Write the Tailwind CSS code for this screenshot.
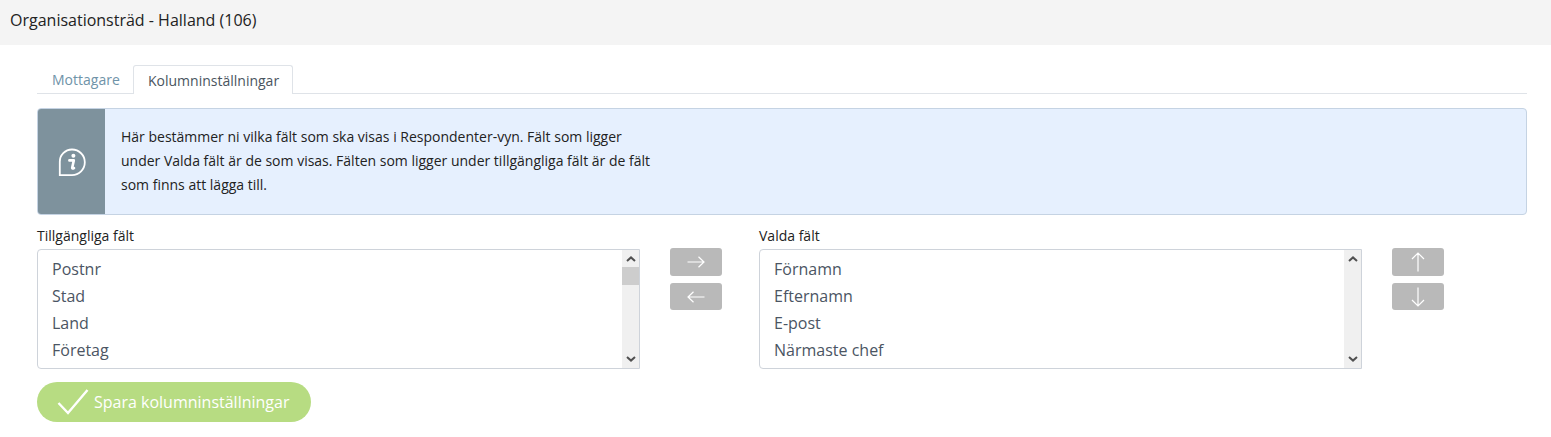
<!DOCTYPE html>
<html lang="sv">
<head>
  <meta charset="UTF-8" />
  <title>Kolumninställningar</title>
  <script src="https://cdn.jsdelivr.net/npm/@tailwindcss/browser@4"></script>
</head>
<body class="bg-white font-['Open_Sans',sans-serif] overflow-hidden">
  <!-- Header -->
  <div class="h-[45px] bg-[#f4f4f4] pl-[10px] pt-[9px] text-[16px] leading-[22px] text-[#222]">Organisationsträd - Halland (106)</div>

  <div class="pl-[37px] pr-[24px] pt-[20px]">
    <!-- Tabs -->
    <div class="flex h-[29px] border-b border-[#dfe3e8] text-[14px]">
      <div class="w-[96px] pl-[15px] pt-[5px] leading-[19px] text-[#6f93a8]">Mottagare</div>
      <div class="w-[160px] h-[29px] bg-white border border-b-0 border-[#dfe3e8] rounded-t-[3px] pl-[14px] pt-[5px] leading-[19px] text-[#4a5560]">Kolumninställningar</div>
    </div>

    <!-- Info box -->
    <div class="mt-[14px] h-[107px] flex bg-[#e6f0fe] border border-[#c5d3e3] rounded-[4px]">
      <div class="w-[67px] bg-[#7e929d] rounded-l-[3px] flex items-center justify-center">
        <svg width="28" height="28" viewBox="0 0 28 28" fill="none" class="mt-[1px]">
          <path d="M14 1.5a12 12 0 1 1 0 25.6H1.8V14A12.2 12.2 0 0 1 14 1.5Z" stroke="#fff" stroke-width="1.8"/>
          <circle cx="15.4" cy="7.8" r="2" fill="#fff"/>
          <path d="M11.4 12.4h4.4l-1.6 7.4c-.1.6.6.8 1.8.2M11.2 20.6" stroke="#fff" stroke-width="2.6" stroke-linecap="round" stroke-linejoin="round"/>
        </svg>
      </div>
      <p class="pl-[16px] pt-[16px] text-[14px] leading-[24px] text-[#222]">
        Här bestämmer ni vilka fält som ska visas i Respondenter-vyn. Fält som ligger<br>
        under Valda fält är de som visas. Fälten som ligger under tillgängliga fält är de fält<br>
        som finns att lägga till.
      </p>
    </div>

    <!-- Field lists -->
    <div class="mt-[11px] flex">
      <div class="w-[603px]">
        <div class="h-[19px] text-[14px] leading-[19px] text-[#222]">Tillgängliga fält</div>
        <div class="mt-[4px] h-[120px] flex border border-[#ced3da] rounded-[4px] rounded-r-none">
          <div class="flex-1 pl-[14px] pt-[6px] text-[16px] leading-[27px] text-[#4b5563]">
            <div>Postnr</div>
            <div>Stad</div>
            <div>Land</div>
            <div>Företag</div>
          </div>
          <div class="w-[17px] bg-[#f0f0f0] flex flex-col items-center">
            <svg width="10" height="6" viewBox="0 0 10 6" fill="none" class="mt-[6px]"><path d="M1 5l4-3.6L9 5" stroke="#505050" stroke-width="2"/></svg>
            <div class="mt-[5px] w-full h-[18px] bg-[#cdcdcd]"></div>
            <svg width="10" height="6" viewBox="0 0 10 6" fill="none" class="mt-auto mb-[6px]"><path d="M1 1l4 3.6L9 1" stroke="#505050" stroke-width="2"/></svg>
          </div>
        </div>
      </div>

      <div class="ml-[30px] w-[52px] pt-[22px] flex flex-col gap-[7px]">
        <div class="h-[28px] bg-[#b9b9b9] rounded-[3px] flex items-center justify-center">
          <svg width="18" height="12" viewBox="0 0 18 12" fill="none"><path d="M0.5 6H17M11.5 0.8 17 6l-5.5 5.2" stroke="#fff" stroke-width="1.2"/></svg>
        </div>
        <div class="h-[27px] bg-[#b9b9b9] rounded-[3px] flex items-center justify-center">
          <svg width="18" height="12" viewBox="0 0 18 12" fill="none"><path d="M17.5 6H1M6.5 0.8 1 6l5.5 5.2" stroke="#fff" stroke-width="1.2"/></svg>
        </div>
      </div>

      <div class="ml-[37px] w-[603px]">
        <div class="h-[19px] text-[14px] leading-[19px] text-[#222]">Valda fält</div>
        <div class="mt-[4px] h-[120px] flex border border-[#ced3da] rounded-[4px] rounded-r-none">
          <div class="flex-1 pl-[14px] pt-[6px] text-[16px] leading-[27px] text-[#4b5563]">
            <div>Förnamn</div>
            <div>Efternamn</div>
            <div>E-post</div>
            <div>Närmaste chef</div>
          </div>
          <div class="w-[17px] bg-[#f0f0f0] flex flex-col items-center">
            <svg width="10" height="6" viewBox="0 0 10 6" fill="none" class="mt-[6px]"><path d="M1 5l4-3.6L9 5" stroke="#505050" stroke-width="2"/></svg>
            <svg width="10" height="6" viewBox="0 0 10 6" fill="none" class="mt-auto mb-[6px]"><path d="M1 1l4 3.6L9 1" stroke="#505050" stroke-width="2"/></svg>
          </div>
        </div>
      </div>

      <div class="ml-[30px] w-[52px] pt-[22px] flex flex-col gap-[7px]">
        <div class="h-[28px] bg-[#b9b9b9] rounded-[3px] flex items-center justify-center">
          <svg width="14" height="20" viewBox="0 0 14 20" fill="none"><path d="M7 19.5V1M1 7 7 1l6 6" stroke="#fff" stroke-width="1.2"/></svg>
        </div>
        <div class="h-[27px] bg-[#b9b9b9] rounded-[3px] flex items-center justify-center">
          <svg width="14" height="20" viewBox="0 0 14 20" fill="none"><path d="M7 0.5V19M1 13l6 6 6-6" stroke="#fff" stroke-width="1.2"/></svg>
        </div>
      </div>
    </div>

    <!-- Save -->
    <div class="mt-[13px] w-[274px] h-[40px] bg-[#b7dc82] rounded-full flex items-center pl-[20px] text-[16px] text-white">
      <svg width="32" height="26" viewBox="0 0 32 26" fill="none" class="shrink-0"><path d="M1.5 14 11 24 30.5 1" stroke="#fff" stroke-width="2.4"/></svg>
      <span class="ml-[5px]">Spara kolumninställningar</span>
    </div>
  </div>
</body>
</html>
